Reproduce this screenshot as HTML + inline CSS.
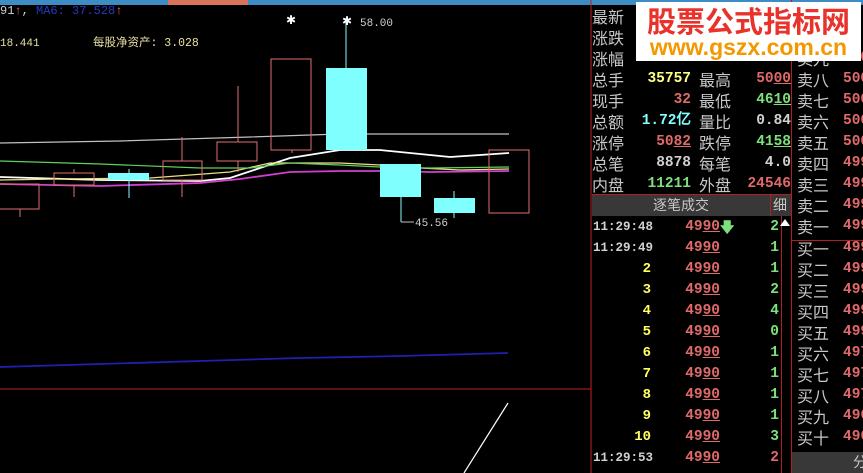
<!DOCTYPE html>
<html><head><meta charset="utf-8"><style>
*{margin:0;padding:0;box-sizing:border-box}
body{width:863px;height:473px;background:#000;overflow:hidden;position:relative;font-family:"Liberation Sans","Noto Sans CJK SC",sans-serif}
.a{position:absolute;white-space:nowrap}
.lb{color:#c8c8c8;font-size:16px;line-height:21px;font-family:"Noto Sans CJK SC","WenQuanYi Zen Hei",sans-serif}
.n{font-family:"Liberation Mono",monospace;font-weight:bold;font-size:14.5px;line-height:21px;text-align:right}
.t{font-family:"Liberation Mono",monospace;font-weight:bold;font-size:12.5px;line-height:21px;color:#d0d0d0}
.r{color:#e06a6a}.g{color:#7de07d}.y{color:#ffff80}.w{color:#d0d0d0}.c{color:#80ffff}
u{text-decoration:underline}
</style></head><body>
<div class="a" style="left:0;top:0;width:863px;height:5px;background:#3d8cc4"></div>
<div class="a" style="left:168px;top:0;width:80px;height:5px;background:#d9735a"></div>

<div class="a" style="left:0;top:4px;font-family:'Liberation Mono',monospace;font-size:12px;line-height:14px"><span class="w">91</span><span class="r">↑</span><span class="w">,</span> <span style="color:#2838c0">MA6: 37.528</span><span class="r">↑</span></div>
<div class="a" style="left:0;top:37px;font-family:'Liberation Mono',monospace;font-size:11px;line-height:14px;color:#e8e0a0">18.441</div>
<div class="a" style="left:93px;top:37px;font-size:11.5px;line-height:14px;color:#e8e0a0;font-family:'Liberation Mono','Noto Sans CJK SC',monospace">每股净资产: 3.028</div>

<svg class="a" style="left:0;top:0" width="592" height="473">
<g fill="none" stroke-width="1.2">
<polyline stroke="#c0c0c0" points="0,143 120,141 250,137 340,134 430,134 509,134"/>
<polyline stroke="#ffffff" stroke-width="1.8" points="0,177 100,180 200,181 230,178 260,168 290,158 340,150 380,150 410,153 450,157 480,155 509,153"/>
<polyline stroke="#e8e080" points="0,180 60,179 150,178 230,172 270,163 340,163 380,165 420,168 460,170 509,169"/>
<polyline stroke="#60d060" points="0,161 100,164 200,168 250,168 290,163 340,165 380,167 430,168 509,167"/>
<polyline stroke="#d040d0" stroke-width="1.8" points="0,184 100,186 200,183 240,179 290,172 340,171 380,171 430,172 509,171"/>
<polyline stroke="#2020b0" stroke-width="1.8" points="0,367 100,364 200,361 300,358 400,356 508,353"/>
<line x1="508" y1="403" x2="464" y2="473" stroke="#fff"/>
</g>
<g shape-rendering="crispEdges" stroke-width="1" fill="none">
<line x1="0" y1="389" x2="591" y2="389" stroke="#c02020"/>
<line x1="591" y1="0" x2="591" y2="473" stroke="#c02020"/>
<g stroke="#e07070">
<rect x="-1" y="184" width="40" height="25"/><line x1="20" y1="209" x2="20" y2="217"/>
<rect x="54" y="173" width="40" height="12"/><line x1="74" y1="169" x2="74" y2="173"/><line x1="74" y1="185" x2="74" y2="197"/>
<rect x="163" y="161" width="39" height="19"/><line x1="182" y1="137" x2="182" y2="161"/><line x1="182" y1="180" x2="182" y2="197"/>
<rect x="217" y="142" width="40" height="19"/><line x1="238" y1="86" x2="238" y2="142"/><line x1="238" y1="161" x2="238" y2="172"/>
<rect x="271" y="59" width="40" height="91"/><line x1="292" y1="150" x2="292" y2="153"/>
<rect x="489" y="150" width="40" height="63"/>
</g>
<g stroke="#80ffff">
<line x1="129" y1="169" x2="129" y2="198"/><line x1="346" y1="18" x2="346" y2="68"/><line x1="401" y1="197" x2="401" y2="222"/><line x1="454" y1="191" x2="454" y2="218"/>
</g>
<line x1="401" y1="222" x2="414" y2="222" stroke="#c0c0c0"/>
</g>
<g fill="#80ffff">
<rect x="108" y="173" width="41" height="7"/>
<rect x="326" y="68" width="41" height="82"/>
<rect x="380" y="164" width="41" height="33"/>
<rect x="434" y="198" width="41" height="15"/>
</g>
<text x="291" y="24" fill="#fff" font-size="12" text-anchor="middle" font-family="Liberation Sans">✱</text>
<text x="347" y="25" fill="#fff" font-size="12" text-anchor="middle" font-family="Liberation Sans">✱</text>
<text x="360" y="26" fill="#d0d0d0" font-size="11" font-family="Liberation Mono">58.00</text>
<text x="415" y="226" fill="#d0d0d0" font-size="11" font-family="Liberation Mono">45.56</text>
</svg>

<div class="a" style="left:791px;top:0;width:1px;height:473px;background:#b02020"></div>
<div class="a" style="left:592px;top:194px;width:199px;height:1px;background:#b02020"></div>
<div class="a" style="left:592px;top:195px;width:199px;height:21px;background:#383838"></div>
<div class="a" style="left:770px;top:195px;width:1px;height:21px;background:#b02020"></div>
<div class="a" style="left:781px;top:216px;width:1px;height:257px;background:#b02020"></div>
<div class="a lb" style="left:592px;top:195px;width:178px;text-align:center;font-size:14px">逐笔成交</div>
<div class="a lb" style="left:773px;top:195px;font-size:14px">细</div>
<div class="a" style="left:780px;top:219px;width:0;height:0;border-left:5px solid transparent;border-right:5px solid transparent;border-bottom:7px solid #fff"></div>
<div class="a" style="left:792px;top:240px;width:71px;height:1px;background:#b02020"></div>
<div class="a" style="left:792px;top:452px;width:71px;height:21px;background:#383838"></div>
<div class="a lb" style="left:853px;top:452px;font-size:14px">分</div>

<div class="a lb" style="left:592px;top:6px">最新<br>涨跌<br>涨幅<br>总手<br>现手<br>总额<br>涨停<br>总笔<br>内盘</div>
<div class="a n" style="left:630px;top:69px;width:61px"><span class="y">35757</span><br><span class="r">32</span><br><span class="c">1.72亿</span><br><span class="r">50<u>82</u></span><br><span class="w">8878</span><br><span class="g">11211</span></div>
<div class="a n r" style="left:630px;top:48px;width:61px;opacity:.6">8.16%</div>
<div class="a lb" style="left:699px;top:69px">最高<br>最低<br>量比<br>跌停<br>每笔<br>外盘</div>
<div class="a n" style="left:735px;top:69px;width:56px"><span class="r">50<u>00</u></span><br><span class="g">46<u>10</u></span><br><span class="w">0.84</span><br><span class="g">41<u>58</u></span><br><span class="w">4.0</span><br><span class="r">24546</span></div>
<div class="a n g" style="left:735px;top:48px;width:56px">4610</div>

<div class="a lb" style="left:797px;top:48px">卖九<br>卖八<br>卖七<br>卖六<br>卖五<br>卖四<br>卖三<br>卖二<br>卖一</div>
<div class="a n r" style="left:843px;top:48px;text-align:left">500<br>500<br>500<br>500<br>500<br>499<br>499<br>499<br>499</div>
<div class="a lb" style="left:797px;top:238px">买一<br>买二<br>买三<br>买四<br>买五<br>买六<br>买七<br>买八<br>买九<br>买十</div>
<div class="a n r" style="left:843px;top:238px;text-align:left">499<br>499<br>499<br>499<br>499<br>497<br>497<br>497<br>496<br>496</div>

<div class="a t" style="left:593px;top:217px">11:29:48<br>11:29:49</div>
<div class="a n" style="left:593px;top:259px;width:58px;color:#ffff60;font-size:14px">2<br>3<br>4<br>5<br>6<br>7<br>8<br>9<br>10</div>
<div class="a t" style="left:593px;top:448px">11:29:53</div>
<div class="a n r" style="left:660px;top:217px;width:60px">49<u>90</u><br>49<u>90</u><br>49<u>90</u><br>49<u>90</u><br>49<u>90</u><br>49<u>90</u><br>49<u>90</u><br>49<u>90</u><br>49<u>90</u><br>49<u>90</u><br>49<u>90</u><br>49<u>90</u></div>
<div class="a g" style="left:720px;top:217px;font-size:14px;line-height:21px;font-weight:bold">🡇</div>
<div class="a n" style="left:760px;top:217px;width:19px"><span class="g">2</span><br><span class="g">1</span><br><span class="g">1</span><br><span class="g">2</span><br><span class="g">4</span><br><span class="g">0</span><br><span class="g">1</span><br><span class="g">1</span><br><span class="g">1</span><br><span class="g">1</span><br><span class="g">3</span><br><span class="r">2</span></div>

<div class="a" style="left:636px;top:2px;width:225px;height:59px;background:#fff"></div>
<div class="a" style="left:636px;top:2px;width:225px;text-align:center;font-family:'Noto Sans CJK SC',sans-serif;font-weight:bold;font-size:29px;line-height:36px;color:#e8322a">股票公式指标网</div>
<div class="a" style="left:636px;top:34px;width:225px;text-align:center;font-family:'Liberation Sans',sans-serif;font-weight:bold;font-size:23px;line-height:26px;color:#f39800">www.gszx.com.cn</div>
</body></html>
